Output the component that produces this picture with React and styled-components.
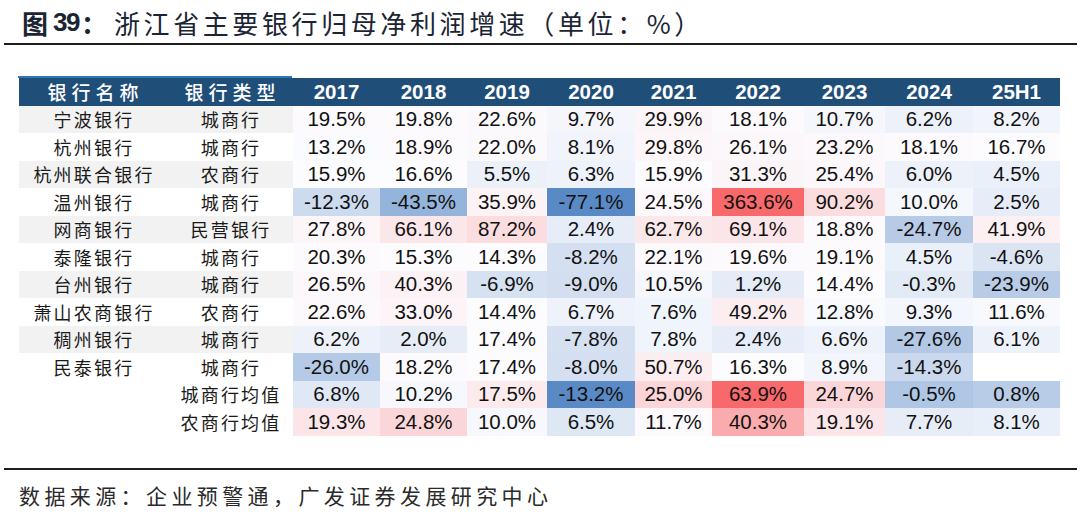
import React from "react";
import styled, { createGlobalStyle } from "styled-components";

const CJK = `"Noto Sans CJK SC", "Noto Sans", sans-serif`;
const LATIN = `"Liberation Sans", Arial, "Noto Sans CJK SC", sans-serif`;

const GlobalStyle = createGlobalStyle`
  html, body { margin: 0; padding: 0; background: #ffffff; }
  body { font-family: ${LATIN}; }
`;

const Page = styled.div`
  width: 1080px;
  height: 514px;
  overflow: hidden;
  display: flex;
  flex-direction: column;
  background: #ffffff;
`;

const TitleBar = styled.h1`
  margin: 0;
  height: 43px;
  padding: 2px 0 0 22px;
  box-sizing: border-box;
  display: flex;
  align-items: center;
  font-family: ${CJK};
  font-weight: 400;
  font-size: 26px;
  letter-spacing: 3.6px;
  color: #1b2433;
  white-space: nowrap;
`;

const FigTag = styled.span`
  font-weight: 700;
  letter-spacing: 0;
  margin-right: 7px;
  display: inline-flex;
  align-items: center;
`;

const FigNum = styled.span`
  font-family: ${LATIN};
  font-weight: 700;
  font-size: 26px;
  letter-spacing: -1.5px;
  margin: 0 2px 0 5px;
`;

const Rule = styled.div`
  height: 2px;
  margin: ${(p) => p.$top || 0}px 3px 0 4px;
  background: #1e1e1e;
  flex: none;
`;

const TableWrap = styled.div`
  margin: 31px 0 0 19px;
  display: flex;
  flex-direction: column;
`;

const Accent = styled.div`
  width: 274px;
  height: 1.5px;
  background: #2e75b6;
  margin-left: -1px;
`;

const Grid = styled.div`
  display: grid;
  grid-template-columns: 148px 126px 87px 87px 80px 88px 77px 92px 81px 88px 87px;
  grid-template-rows: 28px;
  grid-auto-rows: 27.5px;
  width: 1041px;
`;

const HeadCell = styled.div`
  background: #1f4e79;
  color: #ffffff;
  display: flex;
  align-items: center;
  justify-content: center;
  font-family: ${(p) => (p.$cjk ? CJK : LATIN)};
  font-weight: ${(p) => (p.$cjk ? 500 : 700)};
  font-size: ${(p) => (p.$cjk ? "19px" : "20.5px")};
  letter-spacing: ${(p) => (p.$cjk ? "5px" : "0")};
  padding-left: ${(p) => (p.$cjk ? "5px" : "0")};
`;

const LabelCell = styled.div`
  background: ${(p) => (p.$band ? "#f2f2f2" : "#ffffff")};
  color: #1a1a1a;
  display: flex;
  align-items: center;
  justify-content: center;
  font-family: ${CJK};
  font-size: 18px;
  letter-spacing: 2.2px;
  padding-left: 2px;
  white-space: nowrap;
`;

const ValueCell = styled.div`
  background: ${(p) => p.$bg};
  color: #111111;
  display: flex;
  align-items: center;
  justify-content: center;
  font-family: ${LATIN};
  font-size: 20.5px;
`;

const Footer = styled.div`
  padding: 12px 0 0 19px;
  font-family: ${CJK};
  font-size: 21px;
  line-height: 26px;
  letter-spacing: 4.4px;
  color: #2a2a2a;
  white-space: nowrap;
`;

const years = ["2017", "2018", "2019", "2020", "2021", "2022", "2023", "2024", "25H1"];

const banks = [
  ["宁波银行", "城商行", [19.5, 19.8, 22.6, 9.7, 29.9, 18.1, 10.7, 6.2, 8.2]],
  ["杭州银行", "城商行", [13.2, 18.9, 22.0, 8.1, 29.8, 26.1, 23.2, 18.1, 16.7]],
  ["杭州联合银行", "农商行", [15.9, 16.6, 5.5, 6.3, 15.9, 31.3, 25.4, 6.0, 4.5]],
  ["温州银行", "城商行", [-12.3, -43.5, 35.9, -77.1, 24.5, 363.6, 90.2, 10.0, 2.5]],
  ["网商银行", "民营银行", [27.8, 66.1, 87.2, 2.4, 62.7, 69.1, 18.8, -24.7, 41.9]],
  ["泰隆银行", "城商行", [20.3, 15.3, 14.3, -8.2, 22.1, 19.6, 19.1, 4.5, -4.6]],
  ["台州银行", "城商行", [26.5, 40.3, -6.9, -9.0, 10.5, 1.2, 14.4, -0.3, -23.9]],
  ["萧山农商银行", "农商行", [22.6, 33.0, 14.4, 6.7, 7.6, 49.2, 12.8, 9.3, 11.6]],
  ["稠州银行", "城商行", [6.2, 2.0, 17.4, -7.8, 7.8, 2.4, 6.6, -27.6, 6.1]],
  ["民泰银行", "城商行", [-26.0, 18.2, 17.4, -8.0, 50.7, 16.3, 8.9, -14.3, null]],
];

const averages = [
  ["", "城商行均值", [6.8, 10.2, 17.5, -13.2, 25.0, 63.9, 24.7, -0.5, 0.8]],
  ["", "农商行均值", [19.3, 24.8, 10.0, 6.5, 11.7, 40.3, 19.1, 7.7, 8.1]],
];

const LOW = [90, 138, 198];
const MID = [252, 252, 255];
const HIGH = [248, 105, 107];

function mix(a, b, t) {
  const c = a.map((x, i) => Math.round(x + (b[i] - x) * t));
  return `rgb(${c[0]}, ${c[1]}, ${c[2]})`;
}

function makeScale(rows) {
  const vals = rows
    .flatMap((r) => r[2])
    .filter((v) => v != null)
    .sort((a, b) => a - b);
  const min = vals[0];
  const max = vals[vals.length - 1];
  const rank = 0.5 * (vals.length - 1);
  const lo = Math.floor(rank);
  const hi = Math.min(lo + 1, vals.length - 1);
  const mid = vals[lo] + (rank - lo) * (vals[hi] - vals[lo]);
  return (v) => {
    if (v == null) return "#ffffff";
    if (v <= mid) return mix(LOW, MID, (v - min) / (mid - min || 1));
    return mix(MID, HIGH, (v - mid) / (max - mid || 1));
  };
}

const bankScale = makeScale(banks);
const avgScale = makeScale(averages);

function Row({ row, band, scale }) {
  const [name, type, vals] = row;
  return (
    <>
      <LabelCell $band={band}>{name}</LabelCell>
      <LabelCell $band={band}>{type}</LabelCell>
      {vals.map((v, i) => (
        <ValueCell key={i} $bg={scale(v)}>
          {v == null ? "" : `${v.toFixed(1)}%`}
        </ValueCell>
      ))}
    </>
  );
}

export default function App() {
  return (
    <Page>
      <GlobalStyle />
      <TitleBar>
        <FigTag>
          图<FigNum>39</FigNum>：
        </FigTag>
        浙江省主要银行归母净利润增速（单位：%）
      </TitleBar>
      <Rule />
      <TableWrap>
        <Accent />
        <Grid>
          <HeadCell $cjk>银行名称</HeadCell>
          <HeadCell $cjk>银行类型</HeadCell>
          {years.map((y) => (
            <HeadCell key={y}>{y}</HeadCell>
          ))}
          {banks.map((r, i) => (
            <Row key={r[0]} row={r} band={i % 2 === 0} scale={bankScale} />
          ))}
          {averages.map((r) => (
            <Row key={r[1]} row={r} band={false} scale={avgScale} />
          ))}
        </Grid>
      </TableWrap>
      <Rule $top={32} />
      <Footer>数据来源：企业预警通，广发证券发展研究中心</Footer>
    </Page>
  );
}
